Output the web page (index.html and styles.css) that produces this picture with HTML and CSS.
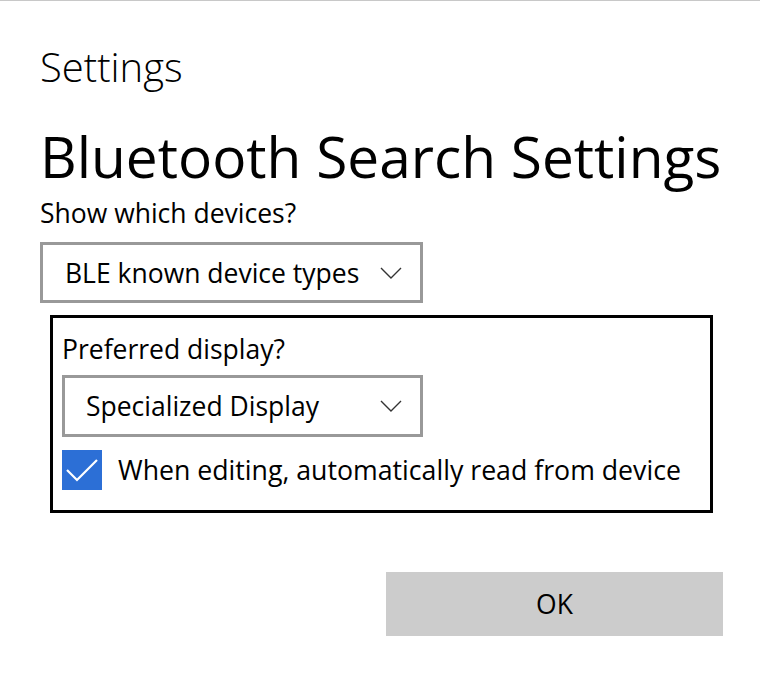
FILE: index.html
```html
<!DOCTYPE html>
<html lang="en">
<head>
<meta charset="utf-8">
<title>Settings</title>
<link rel="stylesheet" href="styles.css">
</head>
<body>
<div class="page">
  <div class="app-title">Settings</div>
  <h1 class="header">Bluetooth Search Settings</h1>
  <div class="label">Show which devices?</div>
  <div class="combo combo-wide">
    <span class="combo-text">BLE known device types</span>
    <svg class="chevron" width="22" height="12" viewBox="0 0 22 12"><polyline points="1,1 11,11 21,1" fill="none" stroke="#333" stroke-width="1.4"/></svg>
  </div>
  <div class="group">
    <div class="label">Preferred display?</div>
    <div class="combo combo-narrow">
      <span class="combo-text">Specialized Display</span>
      <svg class="chevron" width="22" height="12" viewBox="0 0 22 12"><polyline points="1,1 11,11 21,1" fill="none" stroke="#333" stroke-width="1.4"/></svg>
    </div>
    <div class="check-row">
      <span class="checkbox">
        <svg width="40" height="40" viewBox="0 0 40 40"><polyline points="5,20 15,30 35,10" fill="none" stroke="#fff" stroke-width="2.2"/></svg>
      </span>
      <span class="check-label">When editing, automatically read from device</span>
    </div>
  </div>
  <div class="actions">
    <button class="ok-button">OK</button>
  </div>
</div>
</body>
</html>
```

FILE: styles.css
```css
html, body {
  margin: 0;
  padding: 0;
  background: #ffffff;
}

body {
  border-top: 1px solid #c8c8c8;
  font-family: "Open Sans", "Noto Sans", sans-serif;
  color: #000;
}

.page {
  padding: 43px 0 0 40px;
  width: 700px;
}

.app-title {
  font-size: 40px;
  font-weight: 300;
  line-height: 46px;
}

.header {
  margin: 36px 0 0 0;
  font-size: 56.8px;
  font-weight: 400;
  line-height: 60px;
  white-space: nowrap;
}

.label {
  font-size: 26.5px;
  line-height: 36px;
  margin-top: 9px;
}

.combo {
  box-sizing: border-box;
  display: flex;
  align-items: center;
  justify-content: space-between;
  border: 3px solid #999999;
  height: 61px;
  margin-top: 11px;
  padding: 0 18px 0 22px;
}

.combo-wide {
  width: 383px;
}

.combo-text {
  font-size: 26.5px;
  line-height: 36px;
  white-space: nowrap;
}

.chevron {
  display: block;
}

.group {
  box-sizing: border-box;
  margin: 12px 0 0 10px;
  width: 663px;
  border: 3px solid #000;
  padding: 13px 9px 20px 9px;
}

.group .label {
  margin-top: 0;
}

.group .combo {
  width: 361px;
  height: 62px;
  margin-top: 8px;
  padding-left: 21px;
}

.check-row {
  display: flex;
  align-items: center;
  gap: 16px;
  margin-top: 13px;
}

.checkbox {
  display: block;
  width: 40px;
  height: 40px;
  background: #2c6fd6;
}

.checkbox svg {
  display: block;
}

.check-label {
  font-size: 26.7px;
  line-height: 36px;
  white-space: nowrap;
}

.actions {
  display: flex;
  margin-top: 59px;
  padding-left: 346px;
}

.ok-button {
  width: 337px;
  height: 64px;
  border: none;
  background: #cccccc;
  font-family: "Open Sans", "Noto Sans", sans-serif;
  font-size: 26.5px;
  color: #000;
  padding: 0;
}
```
